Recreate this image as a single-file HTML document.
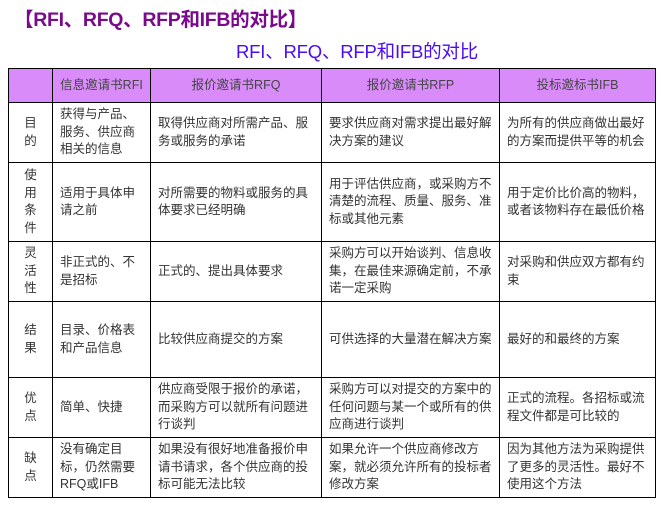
<!DOCTYPE html>
<html><head><meta charset="utf-8"><style>
body{margin:0;background:#fff;width:661px;height:516px;overflow:hidden;font-family:"Liberation Sans","Noto Sans CJK SC",sans-serif;}
.t1{position:absolute;left:14px;top:3px;font-size:19.5px;font-weight:bold;color:#7a0a8c;letter-spacing:-0.3px;}
.t2{position:absolute;left:236px;top:38px;font-size:18.5px;color:#4b0df0;letter-spacing:-0.2px;}
table{position:absolute;left:8px;top:68px;border-collapse:collapse;table-layout:fixed;font-size:12.5px;color:#333;line-height:17.5px;}
td{border:1.5px solid #000;padding:0 7px;vertical-align:middle;white-space:nowrap;overflow:hidden;}
tr.h td{background:#d98cf9;text-align:center;color:#444;}
td.f{text-align:center;padding:0;}
</style></head><body>
<div class="t1">【RFI、RFQ、RFP和IFB的对比】</div>
<div class="t2">RFI、RFQ、RFP和IFB的对比</div>
<table>
<colgroup><col style="width:44px"><col style="width:98px"><col style="width:171px"><col style="width:178px"><col style="width:156px"></colgroup>
<tr class="h" style="height:34px"><td></td><td>信息邀请书RFI</td><td>报价邀请书RFQ</td><td>报价邀请书RFP</td><td>投标邀标书IFB</td></tr>
<tr style="height:60px"><td class="f">目<br>的</td><td>获得与产品、<br>服务、供应商<br>相关的信息</td><td>取得供应商对所需产品、服<br>务或服务的承诺</td><td>要求供应商对需求提出最好解<br>决方案的建议</td><td>为所有的供应商做出最好<br>的方案而提供平等的机会</td></tr>
<tr style="height:79px"><td class="f">使<br>用<br>条<br>件</td><td>适用于具体申<br>请之前</td><td>对所需要的物料或服务的具<br>体要求已经明确</td><td>用于评估供应商，或采购方不<br>清楚的流程、质量、服务、准<br>标或其他元素</td><td>用于定价比价高的物料，<br>或者该物料存在最低价格</td></tr>
<tr style="height:60px"><td class="f">灵<br>活<br>性</td><td>非正式的、不<br>是招标</td><td>正式的、提出具体要求</td><td>采购方可以开始谈判、信息收<br>集，在最佳来源确定前，不承<br>诺一定采购</td><td>对采购和供应双方都有约<br>束</td></tr>
<tr style="height:76px"><td class="f">结<br>果</td><td>目录、价格表<br>和产品信息</td><td>比较供应商提交的方案</td><td>可供选择的大量潜在解决方案</td><td>最好的和最终的方案</td></tr>
<tr style="height:60px"><td class="f">优<br>点</td><td>简单、快捷</td><td>供应商受限于报价的承诺，<br>而采购方可以就所有问题进<br>行谈判</td><td>采购方可以对提交的方案中的<br>任何问题与某一个或所有的供<br>应商进行谈判</td><td>正式的流程。各招标或流<br>程文件都是可比较的</td></tr>
<tr style="height:60px"><td class="f">缺<br>点</td><td>没有确定目<br>标，仍然需要<br>RFQ或IFB</td><td>如果没有很好地准备报价申<br>请书请求，各个供应商的投<br>标可能无法比较</td><td>如果允许一个供应商修改方<br>案，就必须允许所有的投标者<br>修改方案</td><td>因为其他方法为采购提供<br>了更多的灵活性。最好不<br>使用这个方法</td></tr>
</table>
</body></html>
